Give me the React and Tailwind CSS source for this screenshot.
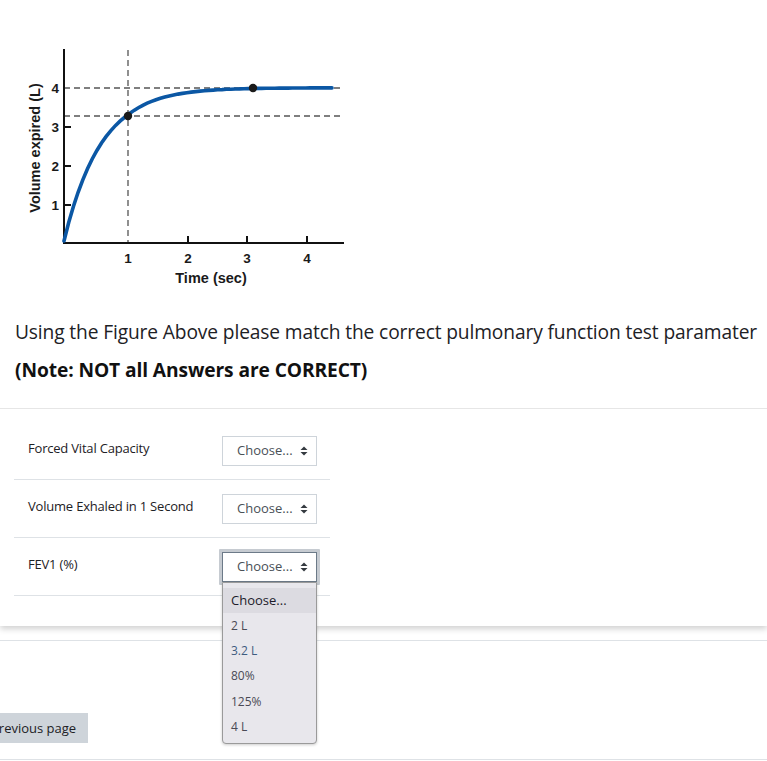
import React from "react";

function Chart() {
  const pts = [];
  for (let i = 0; i <= 60; i++) {
    const t = (i / 60) * 4.4;
    const v = 4 * (1 - Math.exp(-1.74 * t));
    const x = t <= 1 ? 64 + 64 * t : 128 + 60 * (t - 1);
    const y = 241 - 38.3 * v;
    pts.push(`${x.toFixed(1)},${y.toFixed(1)}`);
  }
  const lbl = { fontFamily: '"Liberation Sans", Arial, sans-serif', fontWeight: 700 };
  return (
    <svg width="360" height="260" viewBox="0 40 360 260" className="block">
      <g stroke="#555" strokeWidth="1.3" strokeDasharray="6 4" fill="none">
        <line x1="64" y1="88" x2="344" y2="88" />
        <line x1="64" y1="116" x2="344" y2="116" />
        <line x1="128" y1="50" x2="128" y2="243" />
      </g>
      <g stroke="#111" strokeWidth="2" fill="none">
        <line x1="64" y1="49" x2="64" y2="244" />
        <line x1="63" y1="243" x2="344" y2="243" />
        <line x1="64" y1="127" x2="71" y2="127" />
        <line x1="64" y1="166" x2="71" y2="166" />
        <line x1="64" y1="205" x2="71" y2="205" />
        <line x1="188" y1="236" x2="188" y2="243" />
        <line x1="247" y1="236" x2="247" y2="243" />
        <line x1="307" y1="236" x2="307" y2="243" />
      </g>
      <polyline points={pts.join(" ")} fill="none" stroke="#0b57a4" strokeWidth="3.6" strokeLinecap="round" />
      <circle cx="128" cy="116" r="4.2" fill="#1a1a1a" />
      <circle cx="253" cy="88" r="4.2" fill="#1a1a1a" />
      <g style={lbl} fontSize="13.5" fill="#1a1a1a" textAnchor="end">
        <text x="59" y="93">4</text>
        <text x="59" y="132">3</text>
        <text x="59" y="171">2</text>
        <text x="59" y="210">1</text>
      </g>
      <g style={lbl} fontSize="13.5" fill="#1a1a1a" textAnchor="middle">
        <text x="128" y="263">1</text>
        <text x="188" y="263">2</text>
        <text x="247" y="263">3</text>
        <text x="307" y="263">4</text>
        <text x="211" y="283" fontSize="14.5">Time (sec)</text>
        <text x="0" y="0" fontSize="14.5" transform="translate(40 148) rotate(-90)">Volume expired (L)</text>
      </g>
    </svg>
  );
}

function Arrows() {
  return (
    <svg width="8" height="10" viewBox="0 0 8 10" className="block">
      <path d="M4 0.5 L7.5 4 L0.5 4 Z" fill="#343a40" />
      <path d="M4 9.5 L7.5 6 L0.5 6 Z" fill="#343a40" />
    </svg>
  );
}

function Select({ focused }) {
  return (
    <div className={focused ? "rounded-[1px] p-[3px] bg-[#c6cbd1] -m-[3px]" : ""}>
      <div
        className={
          "flex h-[30px] w-[95px] items-center justify-between bg-white pl-[14px] pr-[8px] text-[13px] text-[#495057] border " +
          (focused ? "border-[#6c7a88]" : "border-[#ced4da]")
        }
      >
        <span>Choose...</span>
        <Arrows />
      </div>
    </div>
  );
}

function Row({ label, focused, children }) {
  return (
    <div className="relative flex h-[58px] items-center border-b border-[#dee2e6]">
      <div className="w-[208px] pl-[14px] text-[13px] text-[#1d2125] -mt-[4px] tracking-[-0.2px]">{label}</div>
      <div className="relative">
        <Select focused={focused} />
        {children}
      </div>
    </div>
  );
}

export default function App() {
  const opts = ["2 L", "3.2 L", "80%", "125%", "4 L"];
  return (
    <div className="relative h-[761px] w-[767px] overflow-hidden bg-white" style={{ fontFamily: '"Open Sans", "Noto Sans", sans-serif' }}>
      <div className="relative bg-white shadow-[0_3px_6px_rgba(0,0,0,0.18)] pb-[30px] pt-[40px]">
        <Chart />
        <div className="px-[15px] pt-[17px]">
          <p className="text-[19.2px] leading-[30px] text-[#1d2125] tracking-[-0.13px] whitespace-nowrap">
            Using the Figure Above please match the correct pulmonary function test paramater
          </p>
          <p className="mt-[8px] text-[19.2px] leading-[30px] font-bold text-[#111] tracking-[-0.1px]">
            (Note: NOT all Answers are CORRECT)
          </p>
        </div>
        <div className="mt-[23px] border-t border-[#e6e6e6]" />
        <div className="mt-[13px] ml-[14px] w-[316px]">
          <Row label="Forced Vital Capacity" />
          <Row label="Volume Exhaled in 1 Second" />
          <Row label="FEV1 (%)" focused>
            <div className="absolute left-0 top-[30px] z-10 w-[95px] rounded-b-[4px] border border-[#9a9a9a] bg-[#e8e7ec] pt-[5px] pb-[4px] shadow-[0_1px_3px_rgba(0,0,0,0.2)]">
              <div className="h-[25px] bg-[#dcdbe1] pl-[8px] text-[13px] leading-[25px] text-[#1d1b2a]">Choose...</div>
              {opts.map((o) => (
                <div
                  key={o}
                  className={
                    "h-[25.4px] pl-[8px] text-[12px] leading-[25.4px] " +
                    (o === "3.2 L" ? "text-[#3e5c80]" : "text-[#4a4a55]")
                  }
                >
                  {o}
                </div>
              ))}
            </div>
          </Row>
        </div>
      </div>
      <div className="mt-[14px] border-t border-[#dee2e6]" />
      <div className="mt-[72px] flex">
        <div className="-ml-[21px] h-[30px] bg-[#ced4da] px-[12px] text-[13px] leading-[30px] text-[#1d2125]">
          Previous page
        </div>
      </div>
      <div className="mt-[16px] border-t border-[#dee2e6]" />
    </div>
  );
}
